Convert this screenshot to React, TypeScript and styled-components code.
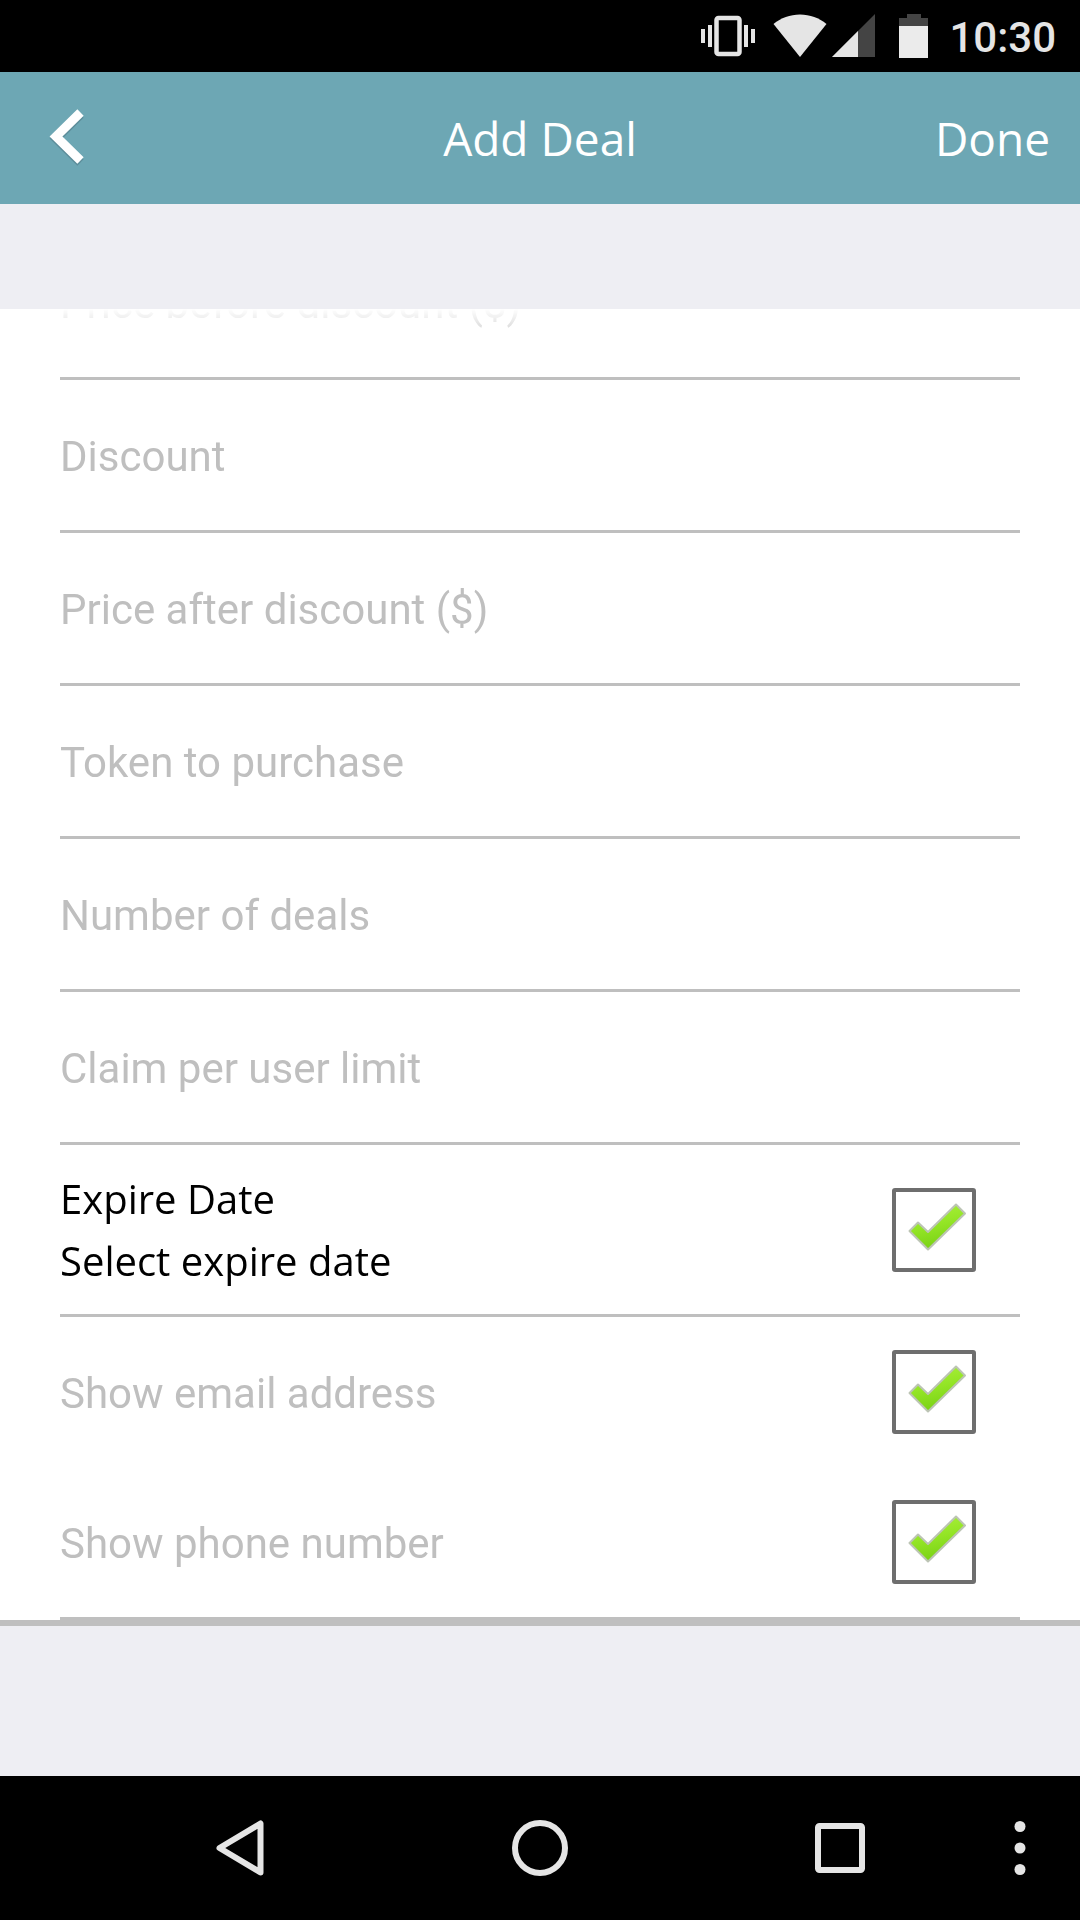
import React, { useLayoutEffect, useRef } from 'react';
import styled, { createGlobalStyle } from 'styled-components';

const GlobalStyle = createGlobalStyle`
  *, *::before, *::after { box-sizing: border-box; }
  body { margin: 0; background: #eeeef3; font-family: Roboto, "Noto Sans", sans-serif; }
  button, input { font: inherit; }
  button { padding: 0; border: 0; background: none; color: inherit; cursor: pointer; }
  svg { display: block; }
`;

const Screen = styled.div`
  display: flex;
  flex-direction: column;
  height: 100vh;
`;

const StatusBar = styled.div`
  display: flex;
  flex: none;
  align-items: center;
  justify-content: flex-end;
  height: 72px;
  padding-right: 24px;
  background: #000;
  color: #e5e5e5;
`;

const StatusIcon = styled.svg<{ $gap: number }>`
  flex: none;
  margin-right: ${(p) => p.$gap}px;
`;

const Clock = styled.time`
  padding-top: 3px;
  font-size: 42px;
  line-height: 48px;
  font-weight: 500;
`;

const Header = styled.header`
  display: grid;
  flex: none;
  grid-template-columns: 1fr auto 1fr;
  align-items: center;
  height: 132px;
  padding: 0 30px;
  background: #6da7b4;
  color: #fff;
  font-family: "Open Sans", "Noto Sans", sans-serif;
  font-size: 46px;
  line-height: 56px;
`;

const Title = styled.h1`
  margin: 0;
  font: inherit;
`;

const BackButton = styled.button`
  justify-self: start;
`;

const DoneButton = styled.button`
  justify-self: end;
`;

const FormPanel = styled.main`
  flex: 1;
  min-height: 0;
  margin: 105px 0 150px;
  border-bottom: 6px solid #bfbfbf;
  background: #fff;
`;

const ScrollArea = styled.form`
  height: 100%;
  padding: 0 60px;
  overflow-y: auto;
  scrollbar-width: none;
  mask-image: linear-gradient(to bottom, transparent, #000 36px);
`;

const Field = styled.input`
  display: block;
  width: 100%;
  height: 153px;
  padding: 3px 0 0;
  border: 0;
  border-bottom: 3px solid #bfbfbf;
  border-radius: 0;
  outline: 0;
  background: none;
  color: #000;
  font-size: 42px;

  &::placeholder {
    color: #bfbfbf;
    opacity: 1;
  }
`;

const OptionGroup = styled.div`
  border-bottom: 3px solid #bfbfbf;
`;

const OptionRow = styled.div<{ $height: number }>`
  display: flex;
  align-items: center;
  justify-content: space-between;
  height: ${(p) => p.$height}px;
  padding-right: 44px;
`;

const OptionLabel = styled.label`
  padding-top: 4px;
  color: #bfbfbf;
  font-size: 42px;
  line-height: 50px;
`;

const DateLabel = styled.label`
  color: #000;
  font-family: "Open Sans", "Noto Sans", sans-serif;
  font-size: 40px;
  line-height: 62px;
`;

const DateLine = styled.span`
  display: block;
`;

const TickFrame = styled.span`
  display: grid;
  flex: none;
  width: 84px;
  height: 84px;

  & > * {
    grid-area: 1 / 1;
  }
`;

const TickInput = styled.input`
  width: 84px;
  height: 84px;
  margin: 0;
  appearance: none;
  border: 4px solid #6e6e6e;
  border-radius: 3px;
  background: #fff;

  &:not(:checked) + svg {
    visibility: hidden;
  }
`;

const TickMark = styled.svg`
  pointer-events: none;
`;

const NavBar = styled.nav`
  display: flex;
  flex: none;
  height: 144px;
  padding-left: 120px;
  background: #000;
  color: #e5e5e5;
`;

const NavMain = styled.div`
  display: flex;
  flex: 1;
  justify-content: space-between;
`;

const NavButton = styled.button<{ $width: number }>`
  display: grid;
  place-items: center;
  width: ${(p) => p.$width}px;
`;

const fields = [
  'Price before discount ($)',
  'Discount',
  'Price after discount ($)',
  'Token to purchase',
  'Number of deals',
  'Claim per user limit',
];

function Tick({ id }: { id: string }) {
  return (
    <TickFrame>
      <TickInput type="checkbox" id={id} defaultChecked />
      <TickMark width="84" height="84" viewBox="0 0 84 84" aria-hidden="true">
        <defs>
          <linearGradient id={`${id}-fill`} x1="0.3" y1="0" x2="0.6" y2="1">
            <stop offset="0" stopColor="#aaf03c" />
            <stop offset="0.45" stopColor="#94e526" />
            <stop offset="1" stopColor="#76cf12" />
          </linearGradient>
        </defs>
        <path
          d="M17.500 43 26 34.500 36 44 64 16.500 73 25.500 36 61.500z"
          fill={`url(#${id}-fill)`}
          stroke="#bcc4b4"
          strokeWidth="2"
          strokeLinejoin="round"
        />
      </TickMark>
    </TickFrame>
  );
}

export default function App() {
  const scroller = useRef<HTMLFormElement>(null);

  useLayoutEffect(() => {
    const el = scroller.current;
    if (el) el.scrollTop = el.scrollHeight;
  }, []);

  return (
    <Screen>
      <GlobalStyle />
      <StatusBar>
        <StatusIcon $gap={18} width="54" height="44" viewBox="0 0 54 44" fill="currentColor" aria-hidden="true">
          <path d="M0 15h4v14H0zM7 11h4v22H7zM43 11h4v22h-4zM50 15h4v14h-4z" />
          <rect x="15.5" y="4" width="23" height="36" rx="2" fill="none" stroke="currentColor" strokeWidth="4.5" />
        </StatusIcon>
        <StatusIcon $gap={5} width="54" height="44" viewBox="0 0 54 44" fill="currentColor" aria-hidden="true">
          <path d="M27 43 .5 10C8 4 17 .5 27 .5S46 4 53.500 10z" />
        </StatusIcon>
        <StatusIcon $gap={24} width="43" height="44" viewBox="0 0 43 44" aria-hidden="true">
          <path d="M43 0v43H0z" fill="#444" />
          <path d="M26 17v26H0z" fill="currentColor" />
        </StatusIcon>
        <StatusIcon $gap={21} width="29" height="44" viewBox="0 0 29 44" aria-hidden="true">
          <path d="M8 0h14v4h7v9H0V4h8z" fill="#444" />
          <path d="M0 12h29v32H0z" fill="#ebebeb" />
        </StatusIcon>
        <Clock>10:30</Clock>
      </StatusBar>

      <Header>
        <BackButton type="button" aria-label="Back">
          <svg width="72" height="72" viewBox="0 0 72 72" fill="none" strokeWidth="9">
            <path d="M50.500 12.500 26 36.500 50.500 60.500" stroke="#4b7480" strokeOpacity="0.5" />
            <path d="M50.500 10.500 26 34.500 50.500 58.500" stroke="#fff" />
          </svg>
        </BackButton>
        <Title>Add Deal</Title>
        <DoneButton type="button">Done</DoneButton>
      </Header>

      <FormPanel>
        <ScrollArea ref={scroller}>
          {fields.map((name) => (
            <Field key={name} type="text" placeholder={name} aria-label={name} />
          ))}
          <OptionGroup>
            <OptionRow $height={169}>
              <DateLabel htmlFor="expire">
                <DateLine>Expire Date</DateLine>
                <DateLine>Select expire date</DateLine>
              </DateLabel>
              <Tick id="expire" />
            </OptionRow>
          </OptionGroup>
          <OptionGroup>
            <OptionRow $height={150}>
              <OptionLabel htmlFor="email">Show email address</OptionLabel>
              <Tick id="email" />
            </OptionRow>
            <OptionRow $height={150}>
              <OptionLabel htmlFor="phone">Show phone number</OptionLabel>
              <Tick id="phone" />
            </OptionRow>
          </OptionGroup>
        </ScrollArea>
      </FormPanel>

      <NavBar>
        <NavMain>
          <NavButton type="button" aria-label="Go back" $width={240}>
            <svg width="48" height="56" viewBox="0 0 48 56" fill="none" stroke="currentColor" strokeWidth="6" strokeLinejoin="round">
              <path d="M44.500 3.500v49L3.500 28z" />
            </svg>
          </NavButton>
          <NavButton type="button" aria-label="Home" $width={240}>
            <svg width="56" height="56" viewBox="0 0 56 56" fill="none" stroke="currentColor" strokeWidth="6">
              <circle cx="28" cy="28" r="25" />
            </svg>
          </NavButton>
          <NavButton type="button" aria-label="Recent apps" $width={240}>
            <svg width="50" height="50" viewBox="0 0 50 50" fill="none" stroke="currentColor" strokeWidth="6">
              <rect x="3" y="3" width="44" height="44" rx="1.500" />
            </svg>
          </NavButton>
        </NavMain>
        <NavButton type="button" aria-label="More options" $width={120}>
          <svg width="12" height="56" viewBox="0 0 12 56" fill="currentColor">
            <circle cx="6" cy="6.500" r="5.500" />
            <circle cx="6" cy="28" r="5.500" />
            <circle cx="6" cy="49.500" r="5.500" />
          </svg>
        </NavButton>
      </NavBar>
    </Screen>
  );
}
